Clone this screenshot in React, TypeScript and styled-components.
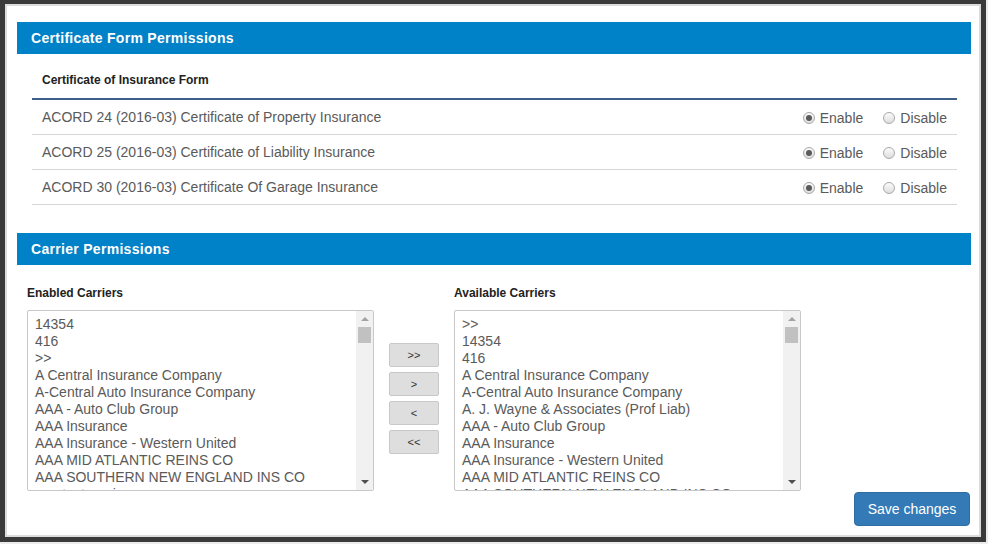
import React from "react";
import styled, { createGlobalStyle } from "styled-components";

const GlobalStyle = createGlobalStyle`
  html, body { margin: 0; padding: 0; background: #ececec; }
  body { font-family: "Liberation Sans", Arial, sans-serif; }
  * { box-sizing: border-box; }
`;

const Frame = styled.div`
  width: 986px;
  height: 542px;
  background: #fff;
  border: 5px solid #3a3a3a;
  border-top-width: 4px;
  box-shadow: inset 0 0 0 2px #dcdcdc;
  padding: 18px 10px 0 12px;
  display: flex;
  flex-direction: column;
`;

const Panel = styled.section<{ $gap?: number }>`
  display: flex;
  flex-direction: column;
  margin-top: ${(p) => p.$gap ?? 0}px;
`;

const PanelHeader = styled.h2`
  margin: 0;
  height: 32px;
  line-height: 32px;
  padding-left: 14px;
  background: #0082c8;
  color: #fff;
  font-size: 14px;
  font-weight: bold;
  letter-spacing: 0.3px;
`;

const FormTable = styled.table`
  margin: 0 14px 0 15px;
  width: calc(100% - 29px);
  border-collapse: collapse;
`;

const HeadCell = styled.th`
  height: 45px;
  padding: 0 10px 10px;
  vertical-align: bottom;
  text-align: left;
  font-size: 12px;
  line-height: 16px;
  font-weight: bold;
  color: #222;
  border-bottom: 2px solid #3e5f8a;
`;

const Cell = styled.td<{ $right?: boolean }>`
  height: 35px;
  padding: 0 10px;
  font-size: 14px;
  color: #5a5a5a;
  vertical-align: middle;
  border-bottom: 1px solid #d6d6d6;
  text-align: ${(p) => (p.$right ? "right" : "left")};
`;

const RadioGroup = styled.div`
  display: inline-flex;
  align-items: center;
  gap: 20px;
`;

const RadioLabel = styled.label`
  display: inline-flex;
  align-items: center;
  gap: 5px;
  font-size: 14px;
  color: #5a5a5a;
`;

const RadioDot = styled.span<{ $checked?: boolean }>`
  width: 12px;
  height: 12px;
  border-radius: 50%;
  border: 1px solid #a9a9a9;
  background: linear-gradient(#fbfbfb, #dedede);
  display: inline-flex;
  align-items: center;
  justify-content: center;
  &::after {
    content: "";
    width: 6px;
    height: 6px;
    border-radius: 50%;
    background: ${(p) => (p.$checked ? "#5a5a5a" : "transparent")};
  }
`;

const CarrierBody = styled.div`
  display: flex;
  align-items: flex-start;
  padding: 20px 0 0 10px;
`;

const Column = styled.div`
  display: flex;
  flex-direction: column;
`;

const ColLabel = styled.div`
  font-size: 12px;
  line-height: 16px;
  font-weight: bold;
  color: #222;
  margin-bottom: 9px;
`;

const ListBox = styled.div`
  width: 347px;
  height: 181px;
  border: 1px solid #c8c8c8;
  border-radius: 2px;
  display: flex;
  overflow: hidden;
  background: #fff;
`;

const Options = styled.ul`
  flex: 1;
  list-style: none;
  margin: 0;
  padding: 5px 0 0 7px;
  font-size: 14px;
  line-height: 17px;
  color: #5a5a5a;
  white-space: nowrap;
  overflow: hidden;
`;

const Scrollbar = styled.div`
  width: 17px;
  background: #f1f1f1;
  display: flex;
  flex-direction: column;
  align-items: center;
`;

const ArrowBox = styled.div<{ $down?: boolean }>`
  height: 16px;
  width: 17px;
  display: flex;
  align-items: center;
  justify-content: center;
  margin-top: ${(p) => (p.$down ? "auto" : "0")};
  &::after {
    content: "";
    width: 0;
    height: 0;
    border-left: 4px solid transparent;
    border-right: 4px solid transparent;
    ${(p) =>
      p.$down
        ? "border-top: 4px solid #505050;"
        : "border-bottom: 4px solid #a3a3a3;"}
  }
`;

const Thumb = styled.div`
  width: 13px;
  height: 16px;
  background: #c1c1c1;
`;

const ButtonStack = styled.div`
  display: flex;
  flex-direction: column;
  gap: 5px;
  padding-top: 58px;
  margin: 0 15px;
`;

const MoveButton = styled.button`
  width: 50px;
  height: 24px;
  padding: 0;
  background: #dedede;
  border: 1px solid #c8c8c8;
  border-radius: 2px;
  font-family: "Liberation Sans", Arial, sans-serif;
  font-size: 11px;
  color: #333;
`;

const SaveRow = styled.div`
  display: flex;
  justify-content: flex-end;
  margin: 1px 1px 0 0;
`;

const SaveButton = styled.button`
  width: 116px;
  height: 34px;
  background: #337ab7;
  border: 1px solid #2e6da4;
  border-radius: 4px;
  color: #fff;
  font-family: "Liberation Sans", Arial, sans-serif;
  font-size: 14px;
  padding: 0;
`;

const forms = [
  "ACORD 24 (2016-03) Certificate of Property Insurance",
  "ACORD 25 (2016-03) Certificate of Liability Insurance",
  "ACORD 30 (2016-03) Certificate Of Garage Insurance",
];

const enabled = [
  "14354",
  "416",
  ">>",
  "A Central Insurance Company",
  "A-Central Auto Insurance Company",
  "AAA - Auto Club Group",
  "AAA Insurance",
  "AAA Insurance - Western United",
  "AAA MID ATLANTIC REINS CO",
  "AAA SOUTHERN NEW ENGLAND INS CO",
  "aaa test carrier",
];

const available = [
  ">>",
  "14354",
  "416",
  "A Central Insurance Company",
  "A-Central Auto Insurance Company",
  "A. J. Wayne & Associates (Prof Liab)",
  "AAA - Auto Club Group",
  "AAA Insurance",
  "AAA Insurance - Western United",
  "AAA MID ATLANTIC REINS CO",
  "AAA SOUTHERN NEW ENGLAND INS CO",
];

function CarrierList({ label, items }: { label: string; items: string[] }) {
  return (
    <Column>
      <ColLabel>{label}</ColLabel>
      <ListBox>
        <Options>
          {items.map((it, i) => (
            <li key={i}>{it}</li>
          ))}
        </Options>
        <Scrollbar>
          <ArrowBox />
          <Thumb />
          <ArrowBox $down />
        </Scrollbar>
      </ListBox>
    </Column>
  );
}

export default function App() {
  return (
    <>
      <GlobalStyle />
      <Frame>
        <Panel>
          <PanelHeader>Certificate Form Permissions</PanelHeader>
          <FormTable>
            <thead>
              <tr>
                <HeadCell colSpan={2}>Certificate of Insurance Form</HeadCell>
              </tr>
            </thead>
            <tbody>
              {forms.map((f) => (
                <tr key={f}>
                  <Cell>{f}</Cell>
                  <Cell $right>
                    <RadioGroup>
                      <RadioLabel>
                        <RadioDot $checked />
                        Enable
                      </RadioLabel>
                      <RadioLabel>
                        <RadioDot />
                        Disable
                      </RadioLabel>
                    </RadioGroup>
                  </Cell>
                </tr>
              ))}
            </tbody>
          </FormTable>
        </Panel>
        <Panel $gap={28}>
          <PanelHeader>Carrier Permissions</PanelHeader>
          <CarrierBody>
            <CarrierList label="Enabled Carriers" items={enabled} />
            <ButtonStack>
              <MoveButton>&gt;&gt;</MoveButton>
              <MoveButton>&gt;</MoveButton>
              <MoveButton>&lt;</MoveButton>
              <MoveButton>&lt;&lt;</MoveButton>
            </ButtonStack>
            <CarrierList label="Available Carriers" items={available} />
          </CarrierBody>
          <SaveRow>
            <SaveButton>Save changes</SaveButton>
          </SaveRow>
        </Panel>
      </Frame>
    </>
  );
}
